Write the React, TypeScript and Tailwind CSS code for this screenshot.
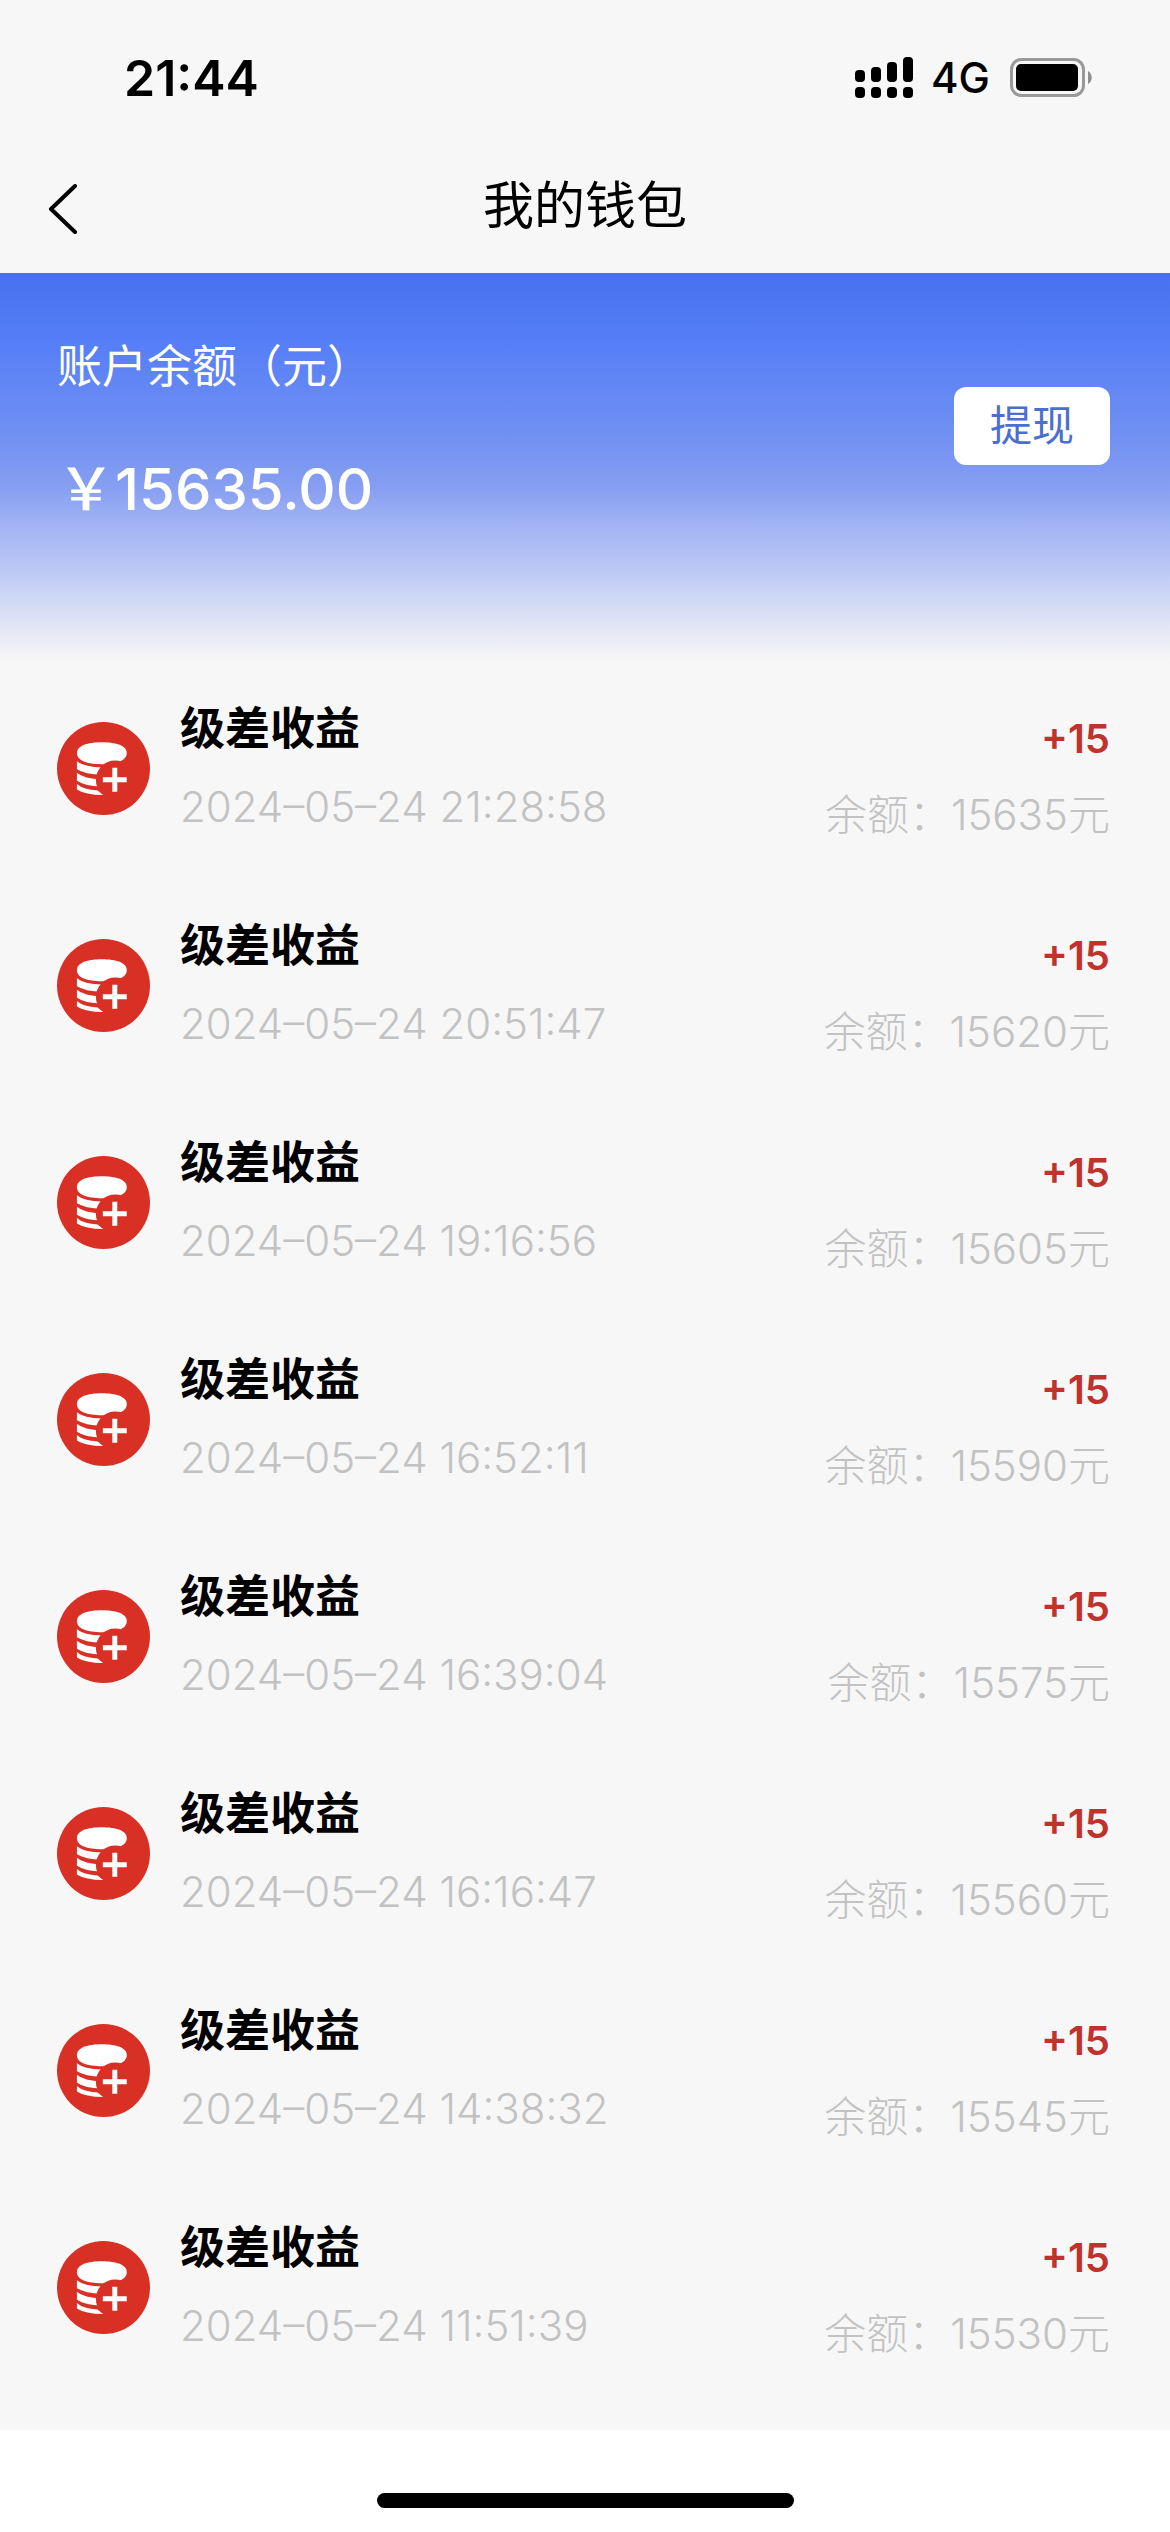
interface WalletRecord {
  title: string;
  time: string;
  amount: number;
  balance: number;
}

const records: WalletRecord[] = [
  { title: "级差收益", time: "2024–05–24 21:28:58", amount: 15, balance: 15635 },
  { title: "级差收益", time: "2024–05–24 20:51:47", amount: 15, balance: 15620 },
  { title: "级差收益", time: "2024–05–24 19:16:56", amount: 15, balance: 15605 },
  { title: "级差收益", time: "2024–05–24 16:52:11", amount: 15, balance: 15590 },
  { title: "级差收益", time: "2024–05–24 16:39:04", amount: 15, balance: 15575 },
  { title: "级差收益", time: "2024–05–24 16:16:47", amount: 15, balance: 15560 },
  { title: "级差收益", time: "2024–05–24 14:38:32", amount: 15, balance: 15545 },
  { title: "级差收益", time: "2024–05–24 11:51:39", amount: 15, balance: 15530 },
];

const SignalIcon = () => (
  <svg width="58" height="42" viewBox="0 0 58 42" aria-hidden="true">
    <rect x="0" y="13" width="10" height="12" rx="4" />
    <rect x="16" y="10" width="10" height="15" rx="4" />
    <rect x="32" y="5" width="10" height="20" rx="4" />
    <rect x="48" y="0" width="10" height="25" rx="4" />
    <rect x="0" y="30" width="10" height="11" rx="4" />
    <rect x="16" y="30" width="10" height="11" rx="4" />
    <rect x="32" y="30" width="10" height="11" rx="4" />
    <rect x="48" y="30" width="10" height="11" rx="4" />
  </svg>
);

const BatteryIcon = () => (
  <svg width="82" height="40" viewBox="0 0 82 40" aria-hidden="true">
    <rect
      x="1.5"
      y="1.5"
      width="72"
      height="36"
      rx="10"
      fill="none"
      stroke="#999"
      strokeWidth="3"
    />
    <rect x="6" y="6" width="62" height="27" rx="5" />
    <path d="M78 13c5 3 5 10 0 13z" fill="#8e8e8e" />
  </svg>
);

const CoinsIcon = () => (
  <svg
    className="size-[93px] shrink-0"
    viewBox="0 0 280 280"
    aria-hidden="true"
  >
    <circle cx="140" cy="140" r="140" fill="#d93025" />
    <g fill="#fff">
      <path d="M60 94C60 71 92 61 135 61S210 71 210 94 178 127 135 127 60 117 60 94Z" />
      <path d="M60 118Q80 135 136 137V159Q84 157 60 142Z" />
      <path d="M60 153Q80 171 136 173V195Q84 193 60 177Z" />
      <path d="M60 187Q80 205 122 206L140 220Q84 219 60 203Z" />
    </g>
    <circle cx="175" cy="174" r="58" fill="#d93025" />
    <path d="M174 138v72M138 174h72" stroke="#fff" strokeWidth="15" />
  </svg>
);

const StatusBar = () => (
  <div className="flex h-[156px] items-center justify-between pr-[78px] pl-[124px]">
    <span className="text-[50px] leading-none font-semibold">21:44</span>
    <div className="flex items-center">
      <SignalIcon />
      <span className="ml-[18px] text-[42px] leading-none font-medium">4G</span>
      <span className="ml-5">
        <BatteryIcon />
      </span>
    </div>
  </div>
);

const Header = () => (
  <header className="grid h-[117px] grid-cols-[1fr_auto_1fr] items-start px-12">
    <button type="button" aria-label="返回" className="justify-self-start pt-7">
      <svg
        width="30"
        height="50"
        viewBox="0 0 30 50"
        fill="none"
        stroke="currentColor"
        strokeWidth="4"
        strokeLinecap="round"
        strokeLinejoin="round"
        aria-hidden="true"
      >
        <path d="M27 2L3 25l24 23" />
      </svg>
    </button>
    <h1 className="pt-5 text-[51px] leading-[60px]">我的钱包</h1>
  </header>
);

const Balance = () => (
  <section className="flex h-[387px] items-start justify-between bg-[linear-gradient(180deg,#4672f0_0%,#567ef6_18%,#7090f2_42%,#869ef2_55%,#a3b5f4_66%,#bac7f5_76%,#d3dcf5_86%,#e6e8f5_93%,#f7f7f7_100%)] pr-[60px] pl-[57px] text-white">
    <div className="pt-[66px]">
      <p className="text-[45px] leading-[56px]">账户余额（元）</p>
      <p className="mt-14 text-[58px] leading-[76px] font-medium">
        ￥15635.00
      </p>
    </div>
    <button
      type="button"
      className="mt-[114px] h-[78px] rounded-xl bg-white px-9 text-[42px] leading-none text-[#4a6fd0]"
    >
      提现
    </button>
  </section>
);

const RecordItem = ({ record }: { record: WalletRecord }) => (
  <li className="flex h-[217px] items-center pr-[60px] pl-[57px]">
    <CoinsIcon />
    <div className="ml-[30px] flex flex-1 flex-col gap-6 pb-1">
      <h2 className="text-[45px] leading-[56px] font-semibold">
        {record.title}
      </h2>
      <p className="text-[42px] leading-[52px] font-light text-[#c2c2c2]">
        {record.time}
      </p>
    </div>
    <div className="flex flex-col items-end gap-6 pt-4">
      <span className="text-[40px] leading-[52px] font-semibold text-[#c0322c]">
        +{record.amount}
      </span>
      <span className="text-[42px] leading-[52px] font-light text-[#c2c2c2]">
        余额：{record.balance}元
      </span>
    </div>
  </li>
);

const App = () => {
  return (
    <div className="flex min-h-screen flex-col bg-[#f7f7f7] font-['Inter','Noto_Sans_CJK_SC',sans-serif] text-black">
      <StatusBar />
      <Header />
      <main className="flex-1">
        <Balance />
        <ul>
          {records.map((record) => (
            <RecordItem key={record.time} record={record} />
          ))}
        </ul>
      </main>
      <footer className="flex h-[102px] items-end justify-center bg-white pb-6">
        <div className="h-[15px] w-[417px] rounded-full bg-black" />
      </footer>
    </div>
  );
};

export default App;
